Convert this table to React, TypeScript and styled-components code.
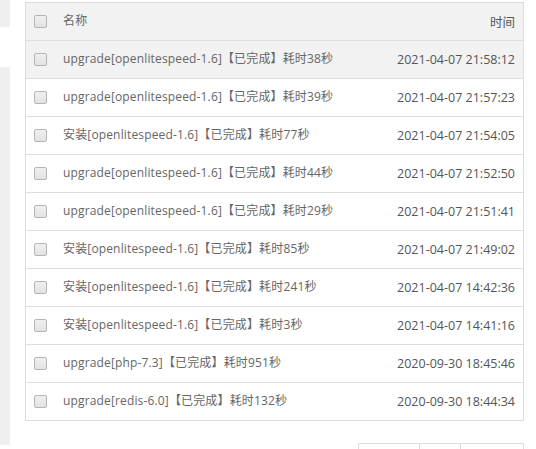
import React from "react";
import styled, { createGlobalStyle } from "styled-components";

const GlobalStyle = createGlobalStyle`
  body {
    margin: 0;
    background: #fff;
    font-family: "Open Sans", "Noto Sans CJK SC", sans-serif;
  }
`;

const Page = styled.div`
  display: flex;
  height: 449px;
  overflow: hidden;
`;

const Side = styled.div`
  width: 10px;
  display: flex;
  flex-direction: column;
  gap: 40px;
`;

const SideBlock = styled.div<{ $h: number }>`
  height: ${(p) => p.$h}px;
  background: #efefef;
`;

const Main = styled.div`
  padding: 2px 0 0 15px;
  width: 499px;
`;

const Table = styled.div`
  border: 1px solid #ddd;
`;

const Row = styled.div<{ $head?: boolean; $hover?: boolean }>`
  display: flex;
  align-items: center;
  height: 37px;
  padding: 0 8px;
  border-top: ${(p) => (p.$head ? "none" : "1px solid #ddd")};
  background: ${(p) => (p.$head || p.$hover ? "#f2f2f2" : "#fff")};
  font-size: 12px;
  color: #666;
`;

const Check = styled.span`
  width: 11px;
  height: 11px;
  border: 1px solid #b5b5b5;
  border-radius: 2px;
  background: linear-gradient(#f0f0f0, #e2e2e2);
  margin-right: 16px;
  flex-shrink: 0;
`;

const Name = styled.span`
  flex: 1;
  padding-bottom: 3px;
  letter-spacing: 0.15px;
`;

const Time = styled.span`
  font-size: 12.5px;
  color: #555;
`;

const Pager = styled.div`
  display: flex;
  justify-content: flex-end;
  margin-top: 22px;
`;

const PageBtn = styled.div<{ $w: number }>`
  width: ${(p) => p.$w}px;
  height: 30px;
  border: 1px solid #ddd;
  margin-left: -1px;
`;

const rows = [
  ["upgrade[openlitespeed-1.6]【已完成】耗时38秒", "2021-04-07 21:58:12"],
  ["upgrade[openlitespeed-1.6]【已完成】耗时39秒", "2021-04-07 21:57:23"],
  ["安装[openlitespeed-1.6]【已完成】耗时77秒", "2021-04-07 21:54:05"],
  ["upgrade[openlitespeed-1.6]【已完成】耗时44秒", "2021-04-07 21:52:50"],
  ["upgrade[openlitespeed-1.6]【已完成】耗时29秒", "2021-04-07 21:51:41"],
  ["安装[openlitespeed-1.6]【已完成】耗时85秒", "2021-04-07 21:49:02"],
  ["安装[openlitespeed-1.6]【已完成】耗时241秒", "2021-04-07 14:42:36"],
  ["安装[openlitespeed-1.6]【已完成】耗时3秒", "2021-04-07 14:41:16"],
  ["upgrade[php-7.3]【已完成】耗时951秒", "2020-09-30 18:45:46"],
  ["upgrade[redis-6.0]【已完成】耗时132秒", "2020-09-30 18:44:34"],
];

export default function App() {
  return (
    <Page>
      <GlobalStyle />
      <Side>
        <SideBlock $h={27} />
        <SideBlock $h={378} />
      </Side>
      <Main>
        <Table>
          <Row $head>
            <Check />
            <Name>名称</Name>
            <Time>时间</Time>
          </Row>
          {rows.map(([name, time], i) => (
            <Row key={i} $hover={i === 0}>
              <Check />
              <Name>{name}</Name>
              <Time>{time}</Time>
            </Row>
          ))}
        </Table>
        <Pager>
          <PageBtn $w={60} />
          <PageBtn $w={40} />
          <PageBtn $w={62} />
        </Pager>
      </Main>
    </Page>
  );
}
